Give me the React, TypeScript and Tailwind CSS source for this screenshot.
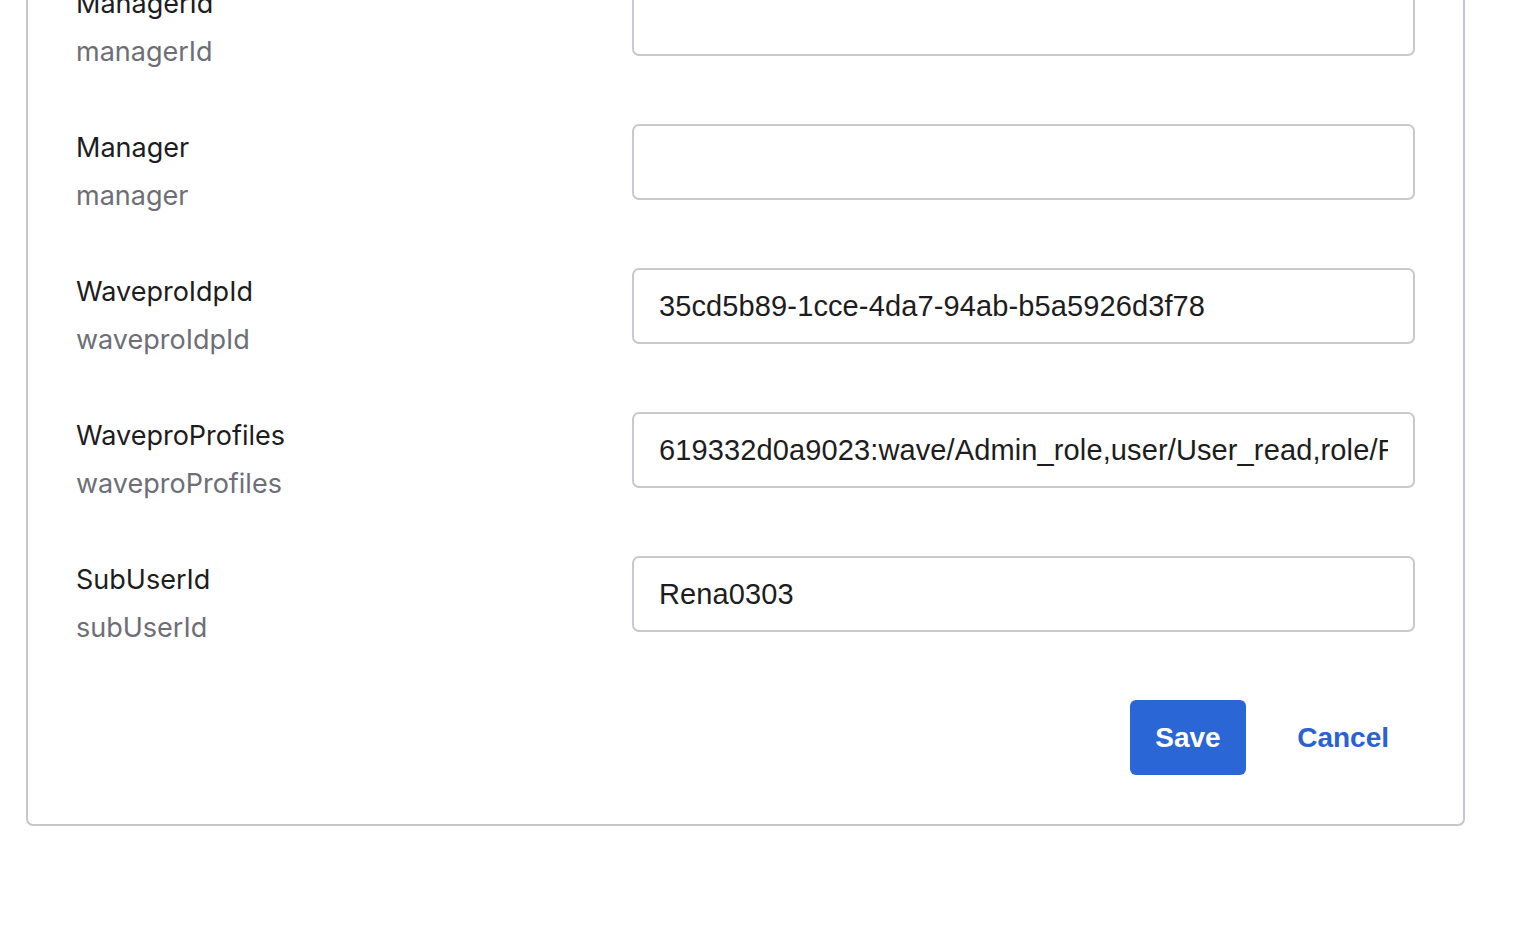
import React, { useState } from 'react';

interface Field {
  label: string;
  name: string;
  value: string;
}

const initialFields: Field[] = [
  { label: 'ManagerId', name: 'managerId', value: '' },
  { label: 'Manager', name: 'manager', value: '' },
  { label: 'WaveproIdpId', name: 'waveproIdpId', value: '35cd5b89-1cce-4da7-94ab-b5a5926d3f78' },
  {
    label: 'WaveproProfiles',
    name: 'waveproProfiles',
    value: '619332d0a9023:wave/Admin_role,user/User_read,role/Role_read,group/Group_read',
  },
  { label: 'SubUserId', name: 'subUserId', value: 'Rena0303' },
];

export default function App() {
  const [fields, setFields] = useState<Field[]>(initialFields);

  // actualizar un campo del formulario
  const handleChange = (name: string, value: string) => {
    setFields(fields.map((f) => (f.name === name ? { ...f, value } : f)));
  };

  return (
    <div className="min-h-[930px] bg-white overflow-hidden">
      <form
        onSubmit={(e) => e.preventDefault()}
        className="ml-[26px] mt-[-70px] w-[1439px] rounded-[7px] border-2 border-[#c6c6cc] bg-white px-[48px] pt-[48px] pb-[49px]"
      >
        <div className="flex flex-col gap-[48px]">
          {fields.map((field) => (
            <div key={field.name} className="grid grid-cols-[556px_1fr]">
              <div className="font-['Inter',sans-serif] text-[27px] leading-[48px]">
                <div className="text-[#1d1d21]">{field.label}</div>
                <div className="text-[#6e6e78]">{field.name}</div>
              </div>
              <input
                type="text"
                name={field.name}
                value={field.value}
                onChange={(e) => handleChange(field.name, e.target.value)}
                className="h-[76px] w-full rounded-[7px] border-2 border-[#c8c8ce] bg-white px-[25px] font-['Liberation_Sans',Arial,sans-serif] text-[29px] tracking-[0.12px] text-[#1d1d21] outline-none"
              />
            </div>
          ))}
        </div>

        <div className="mt-[48px] flex justify-end gap-[25px]">
          <button
            type="submit"
            className="h-[75px] rounded-[6px] bg-[#2a66d6] px-[25.5px] font-['Liberation_Sans',Arial,sans-serif] text-[28px] font-bold text-white"
          >
            Save
          </button>
          <button
            type="button"
            className="h-[75px] px-[26px] font-['Liberation_Sans',Arial,sans-serif] text-[28px] font-bold text-[#2a62d2]"
          >
            Cancel
          </button>
        </div>
      </form>
    </div>
  );
}
